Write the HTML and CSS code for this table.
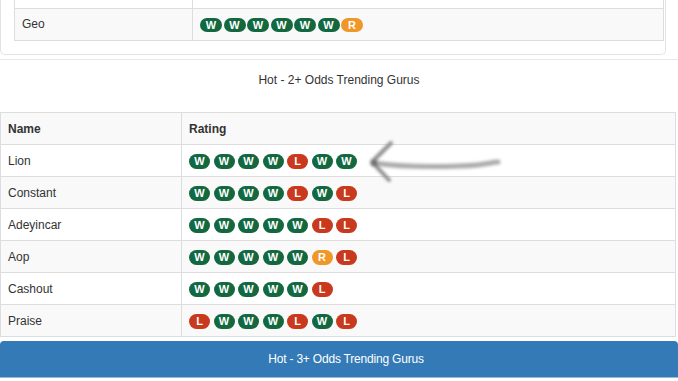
FILE: index.html
```html
<!DOCTYPE html>
<html>
<head>
<meta charset="utf-8">
<link rel="stylesheet" href="styles.css">
</head>
<body>
<div class="panel-top">
  <table class="grid grid-top">
    <tbody>
      <tr><td class="name"></td><td></td></tr>
      <tr><td class="name">Geo</td><td><div class="badges"><span class="b w">W</span><span class="b w">W</span><span class="b w">W</span><span class="b w">W</span><span class="b w">W</span><span class="b w">W</span><span class="b r">R</span></div></td></tr>
    </tbody>
  </table>
</div>

<section class="section2">
  <h2 class="title">Hot - 2+ Odds Trending Gurus</h2>
  <div class="table-wrap">
    <table class="grid grid-main">
      <tbody>
        <tr><th class="name">Name</th><th>Rating</th></tr>
        <tr><td class="name">Lion</td><td><div class="badges"><span class="b w">W</span><span class="b w">W</span><span class="b w">W</span><span class="b w">W</span><span class="b l">L</span><span class="b w">W</span><span class="b w">W</span></div></td></tr>
        <tr><td class="name">Constant</td><td><div class="badges"><span class="b w">W</span><span class="b w">W</span><span class="b w">W</span><span class="b w">W</span><span class="b l">L</span><span class="b w">W</span><span class="b l">L</span></div></td></tr>
        <tr><td class="name">Adeyincar</td><td><div class="badges"><span class="b w">W</span><span class="b w">W</span><span class="b w">W</span><span class="b w">W</span><span class="b w">W</span><span class="b l">L</span><span class="b l">L</span></div></td></tr>
        <tr><td class="name">Aop</td><td><div class="badges"><span class="b w">W</span><span class="b w">W</span><span class="b w">W</span><span class="b w">W</span><span class="b w">W</span><span class="b r">R</span><span class="b l">L</span></div></td></tr>
        <tr><td class="name">Cashout</td><td><div class="badges"><span class="b w">W</span><span class="b w">W</span><span class="b w">W</span><span class="b w">W</span><span class="b w">W</span><span class="b l">L</span></div></td></tr>
        <tr><td class="name">Praise</td><td><div class="badges"><span class="b l">L</span><span class="b w">W</span><span class="b w">W</span><span class="b w">W</span><span class="b l">L</span><span class="b w">W</span><span class="b l">L</span></div></td></tr>
      </tbody>
    </table>
    <svg class="arrow" width="150" height="52" viewBox="0 0 150 52">
      <defs>
        <filter id="soft" x="-10%" y="-30%" width="120%" height="160%">
          <feGaussianBlur stdDeviation="1.4"/>
        </filter>
      </defs>
      <g filter="url(#soft)" fill="none" stroke-linecap="round" stroke-linejoin="round">
        <path d="M14 27 C 40 31, 70 31, 100 30 S 130 26, 138 26" stroke="#ababab" stroke-width="5"/>
        <path d="M31 7 L 12 26 L 29 44" stroke="#8f8f8f" stroke-width="4"/>
        <circle cx="14" cy="27" r="3.5" fill="#707070" stroke="none"/>
      </g>
    </svg>
  </div>
</section>

<section class="panel-blue">
  <div class="panel-heading">Hot - 3+ Odds Trending Gurus</div>
</section>
</body>
</html>
```

FILE: styles.css
```css
html, body {
  margin: 0;
  padding: 0;
  background: #ffffff;
}
body {
  width: 678px;
  height: 381px;
  overflow: hidden;
  font-family: "Liberation Sans", Arial, sans-serif;
  font-size: 12px;
  color: #333333;
}

.panel-top {
  margin-top: -24px;
  width: 666px;
  box-sizing: border-box;
  border: 1px solid #e3e3e3;
  border-top: none;
  border-radius: 0 0 5px 5px;
  padding: 0 1px 13px 13px;
}

.grid {
  border-collapse: collapse;
  table-layout: fixed;
}
.grid td, .grid th {
  border: 1px solid #dddddd;
  padding: 7px 7px;
  line-height: 17px;
  height: 17px;
  text-align: left;
  vertical-align: middle;
}
.grid th {
  font-weight: bold;
  color: #333333;
}

.grid-top {
  width: 650px;
}
.grid-top td.name {
  width: 163px;
}
.grid-top tr:nth-child(even) {
  background: #f9f9f9;
}
.grid-top .badges {
  gap: 1.5px;
}
.grid-top .b {
  width: 22px;
  height: 14px;
  line-height: 14px;
}

.section2 {
  margin-top: 4px;
  border-top: 1px solid #e8e8e8;
}
.title {
  margin: 0;
  padding-top: 12px;
  font-size: 12px;
  font-weight: normal;
  line-height: 17px;
  text-align: center;
  color: #333333;
}

.table-wrap {
  position: relative;
  margin-top: 23px;
}
.grid-main {
  width: 676px;
}
.grid-main .name {
  width: 166px;
}
.grid-main tr:nth-child(odd) {
  background: #f9f9f9;
}
.grid-main td, .grid-main th {
  padding-top: 8px;
  padding-bottom: 6px;
}
.grid-main .badges {
  gap: 3.5px;
}
.grid-main .b {
  width: 21px;
  height: 15px;
  line-height: 15px;
}

.badges {
  display: flex;
  align-items: center;
}
.b {
  display: inline-block;
  border-radius: 8px;
  color: #ffffff;
  font-weight: bold;
  font-size: 11px;
  text-align: center;
}
.b.w { background: #13683f; }
.b.l { background: #c9391d; }
.b.r { background: #f0972a; }

.arrow {
  position: absolute;
  left: 360px;
  top: 24px;
}

.panel-blue {
  margin-top: 4px;
  border-bottom: 1px solid #9dbbd9;
}
.panel-heading {
  height: 36px;
  line-height: 36px;
  background: #337ab7;
  border-radius: 4px 4px 0 0;
  color: #ffffff;
  text-align: center;
  padding-left: 14px;
  font-size: 12px;
  letter-spacing: -0.2px;
}
```
